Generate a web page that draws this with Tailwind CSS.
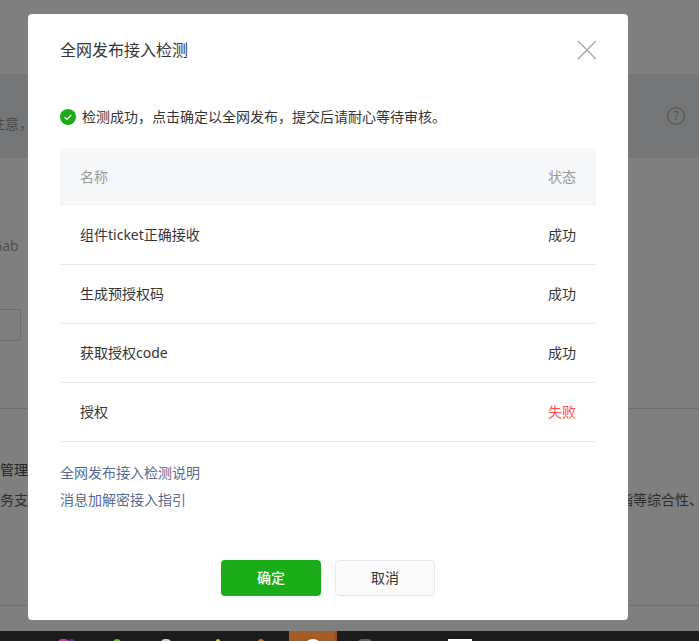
<!DOCTYPE html>
<html lang="en">
<head>
    <meta charset="UTF-8">
    <title>全网发布接入检测</title>
    <script src="https://cdn.jsdelivr.net/npm/@tailwindcss/browser@4"></script>
</head>
<body class="bg-[#7f7f7f] h-[641px] w-[699px] overflow-hidden relative font-['Noto_Sans','Noto_Sans_CJK_SC',sans-serif]">
    <!-- page behind the mask -->
    <div class="h-[631px] flex flex-col text-sm text-[#2e2e2e]">
        <div class="h-[74px]"></div>
        <div class="h-[84px] bg-[#757678] flex items-center justify-between pr-[14px]">
            <span class="text-[#4a4a4a] -ml-[9px] mt-[16px]">注意，</span>
            <svg class="w-[18px] h-[18px]" viewBox="0 0 18 18" fill="none">
                <circle cx="9" cy="9" r="8.3" stroke="#4f4f4f" stroke-width="1"/>
                <text x="9" y="13" text-anchor="middle" font-size="12" fill="#4f4f4f">?</text>
            </svg>
        </div>
        <div class="mt-[78px] leading-[20px] text-[#4f4f4f] -ml-[8px]">Gab</div>
        <div class="h-[32px] w-[21px] mt-[53px] border border-[#6d6d6d] rounded-r-[3px] border-l-0"></div>
        <div class="border-t border-[#707070] mt-[67px]"></div>
        <div class="text-[#262626] mt-[51px] -ml-[14px] leading-[20px]">业管理</div>
        <div class="flex justify-between leading-[20px] mt-[10px] -mr-[4px]"><span class="-ml-[14px]">业务支</span><span>指等综合性、</span></div>
        <div class="border-t border-[#707070] mt-[95px]"></div>
    </div>

    <!-- taskbar -->
    <div class="absolute left-0 right-0 top-[631px] h-[10px] bg-[#1c1c1c]">
        <div class="absolute left-[289px] top-0 w-[48px] h-[10px] bg-[#a65c26] border-r-[3px] border-[#96501f]"></div>
        <div class="absolute left-[304px] top-[8px] w-[18px] h-[18px] rounded-full bg-white"></div>
        <div class="absolute left-[58px] top-[8px] w-[11px] h-[4px] rounded-t-full bg-[#e02aa0]"></div>
        <div class="absolute left-[68px] top-[8px] w-[7px] h-[4px] rounded-t-full bg-[#6a2aa8]"></div>
        <div class="absolute left-[113px] top-[8px] w-[8px] h-[4px] rounded-t-full bg-[#63c51f]"></div>
        <div class="absolute left-[161px] top-[8px] w-[10px] h-[4px] rounded-t-full bg-[#d0d0d0]"></div>
        <div class="absolute left-[216px] top-[8px] w-[4px] h-[4px] rounded-t-full bg-[#d9c92b]"></div>
        <div class="absolute left-[258px] top-[8px] w-[6px] h-[4px] rounded-t-full bg-[#d9701c]"></div>
        <div class="absolute left-[358px] top-[8px] w-[14px] h-[4px] rounded-t-full bg-[#5f5f5f]"></div>
        <div class="absolute left-[448px] top-[8px] w-[24px] h-[4px] bg-white"></div>
    </div>

    <!-- dialog -->
    <div class="absolute left-[28px] top-[14px] w-[600px] h-[606px] bg-white rounded-[4px] flex flex-col px-[32px]">
        <div class="flex items-center justify-between h-[72px]">
            <h1 class="text-base font-normal text-[#353535]">全网发布接入检测</h1>
            <svg class="w-[20px] h-[20px]" viewBox="0 0 20 20" fill="none">
                <path d="M2 1L20 19M20 1L2 19" stroke="#a9a9a9" stroke-width="1.5"/>
            </svg>
        </div>
        <div class="flex items-center gap-[6px] h-[20px] mt-[21px] text-sm text-[#353535]">
            <svg class="w-[16px] h-[16px]" viewBox="0 0 16 16">
                <circle cx="8" cy="8" r="8" fill="#1aad19"/>
                <path d="M4.6 8.2L7 10.4L11.4 5.9" fill="none" stroke="#fff" stroke-width="1.3"/>
            </svg>
            <span>检测成功，点击确定以全网发布，提交后请耐心等待审核。</span>
        </div>
        <div class="mt-[21px] text-sm text-[#353535]">
            <div class="h-[58px] bg-[#f6f7f9] flex items-center justify-between px-[20px] text-[#9a9a9a]">
                <span>名称</span><span>状态</span>
            </div>
            <div class="h-[59px] border-b border-[#e7e7eb] flex items-center justify-between px-[20px]">
                <span>组件ticket正确接收</span><span>成功</span>
            </div>
            <div class="h-[59px] border-b border-[#e7e7eb] flex items-center justify-between px-[20px]">
                <span>生成预授权码</span><span>成功</span>
            </div>
            <div class="h-[59px] border-b border-[#e7e7eb] flex items-center justify-between px-[20px]">
                <span>获取授权code</span><span>成功</span>
            </div>
            <div class="h-[59px] border-b border-[#e7e7eb] flex items-center justify-between px-[20px]">
                <span>授权</span><span class="text-[#fa5151]">失败</span>
            </div>
        </div>
        <div class="mt-[17px] text-sm text-[#576b95] leading-[27px]">
            <div>全网发布接入检测说明</div>
            <div>消息加解密接入指引</div>
        </div>
        <div class="mt-auto mb-[24px] flex justify-center gap-[14px] text-sm">
            <button class="w-[100px] h-[36px] rounded-[4px] bg-[#1aad19] text-white font-medium">确定</button>
            <button class="w-[100px] h-[36px] rounded-[4px] bg-[#fafafa] border border-[#e7e7eb] text-[#353535]">取消</button>
        </div>
    </div>
</body>
</html>
